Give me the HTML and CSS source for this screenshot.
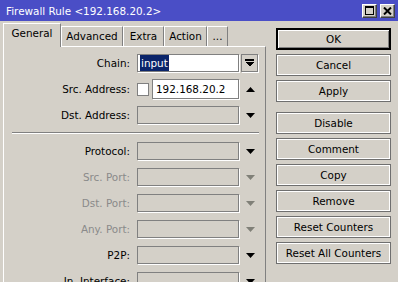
FILE: index.html
```html
<!DOCTYPE html>
<html>
<head>
<meta charset="utf-8">
<link rel="stylesheet" href="styles.css">
</head>
<body>
<div class="titlebar">
  <span class="title">Firewall Rule &lt;192.168.20.2&gt;</span>
  <div class="tb-btns">
    <span class="tb-btn"><svg width="9" height="9" viewBox="0 0 9 9" shape-rendering="crispEdges"><rect x="0.5" y="0.5" width="8" height="8" fill="none" stroke="#000"/><rect x="0" y="0" width="9" height="2" fill="#000"/></svg></span>
    <span class="tb-btn"><svg width="9" height="8" viewBox="0 0 9 8"><path d="M1 0.5 L8 7.5 M8 0.5 L1 7.5" stroke="#000" stroke-width="2"/></svg></span>
  </div>
</div>
<div class="main">
  <div class="left">
    <div class="tabs">
      <div class="tab active t-general">General</div>
      <div class="tab t-advanced">Advanced</div>
      <div class="tab t-extra">Extra</div>
      <div class="tab t-action">Action</div>
      <div class="tab t-more">...</div>
    </div>
    <div class="panel">
      <div class="row">
        <div class="label">Chain:</div>
        <div class="field white"><span class="sel">input</span></div>
        <div class="dd-btn"><svg width="9" height="8" viewBox="0 0 9 8" shape-rendering="crispEdges"><rect x="0" y="0" width="9" height="2" fill="#000"/><polygon points="0,3 9,3 4.5,7.5" fill="#000"/></svg></div>
      </div>
      <div class="row">
        <div class="label">Src. Address:</div>
        <div class="combo">
          <span class="check"></span>
          <div class="field white addr">192.168.20.2</div>
        </div>
        <div class="arrow"><svg width="9" height="5" viewBox="0 0 9 5"><polygon points="0,5 9,5 4.5,0" fill="#000"/></svg></div>
      </div>
      <div class="row">
        <div class="label">Dst. Address:</div>
        <div class="field"></div>
        <div class="arrow"><svg width="9" height="5" viewBox="0 0 9 5"><polygon points="0,0 9,0 4.5,5" fill="#000"/></svg></div>
      </div>
      <div class="sep"></div>
      <div class="row">
        <div class="label">Protocol:</div>
        <div class="field"></div>
        <div class="arrow"><svg width="9" height="5" viewBox="0 0 9 5"><polygon points="0,0 9,0 4.5,5" fill="#000"/></svg></div>
      </div>
      <div class="row dim">
        <div class="label">Src. Port:</div>
        <div class="field"></div>
        <div class="arrow"><svg width="9" height="5" viewBox="0 0 9 5"><polygon points="0,0 9,0 4.5,5" fill="#808078"/></svg></div>
      </div>
      <div class="row dim">
        <div class="label">Dst. Port:</div>
        <div class="field"></div>
        <div class="arrow"><svg width="9" height="5" viewBox="0 0 9 5"><polygon points="0,0 9,0 4.5,5" fill="#808078"/></svg></div>
      </div>
      <div class="row dim">
        <div class="label">Any. Port:</div>
        <div class="field"></div>
        <div class="arrow"><svg width="9" height="5" viewBox="0 0 9 5"><polygon points="0,0 9,0 4.5,5" fill="#808078"/></svg></div>
      </div>
      <div class="row">
        <div class="label">P2P:</div>
        <div class="field"></div>
        <div class="arrow"><svg width="9" height="5" viewBox="0 0 9 5"><polygon points="0,0 9,0 4.5,5" fill="#000"/></svg></div>
      </div>
      <div class="row">
        <div class="label">In. Interface:</div>
        <div class="field"></div>
        <div class="arrow"><svg width="9" height="5" viewBox="0 0 9 5"><polygon points="0,0 9,0 4.5,5" fill="#000"/></svg></div>
      </div>
    </div>
  </div>
  <div class="buttons">
    <div class="btn default">OK</div>
    <div class="btn">Cancel</div>
    <div class="btn">Apply</div>
    <div class="btn spaced">Disable</div>
    <div class="btn">Comment</div>
    <div class="btn">Copy</div>
    <div class="btn">Remove</div>
    <div class="btn">Reset Counters</div>
    <div class="btn">Reset All Counters</div>
  </div>
</div>
</body>
</html>
```
FILE: styles.css
```css
html, body {
  margin: 0;
  padding: 0;
}
body {
  width: 398px;
  height: 282px;
  overflow: hidden;
  background: #d4d0c8;
  font-family: "DejaVu Sans", sans-serif;
  font-size: 10.4px;
  color: #000;
}
.titlebar {
  height: 21px;
  background: #4a4ec6;
  display: flex;
  align-items: center;
  justify-content: space-between;
  padding: 0 3px 0 6px;
  color: #fff;
}
.title {
  white-space: nowrap;
}
.tb-btns {
  display: flex;
  gap: 3px;
}
.tb-btn {
  width: 15px;
  height: 14px;
  box-sizing: border-box;
  background: #d4d0c8;
  border: 1px solid;
  border-color: #fff #404040 #404040 #fff;
  box-shadow: inset -1px -1px #808080;
  display: flex;
  align-items: center;
  justify-content: center;
}
.tb-btn svg {
  display: block;
}
.main {
  display: flex;
  padding-top: 2px;
}
.left {
  margin-left: 3px;
  width: 263px;
}
.tabs {
  display: flex;
  align-items: flex-end;
  height: 23px;
}
.tab {
  height: 20px;
  box-sizing: border-box;
  border-top: 1px solid #fff;
  border-left: 1px solid #fff;
  border-right: 1px solid #808080;
  background: #d0ccc4;
  text-align: center;
  line-height: 19px;
  white-space: nowrap;
}
.tab.active {
  height: 24px;
  margin-bottom: -1px;
  position: relative;
  z-index: 1;
  background: #d4d0c8;
  line-height: 19px;
}
.t-general { width: 58px; }
.t-advanced { width: 62px; }
.t-extra { width: 41px; }
.t-action { width: 43px; }
.t-more { width: 21px; }
.panel {
  height: 260px;
  box-sizing: border-box;
  border-top: 1px solid #fff;
  border-left: 1px solid #fff;
  border-right: 1px solid #808080;
  padding-top: 7px;
}
.row {
  display: flex;
  align-items: center;
  height: 18px;
  margin-bottom: 8px;
}
.label {
  width: 133px;
  box-sizing: border-box;
  padding-right: 7px;
  text-align: right;
  white-space: nowrap;
}
.dim .label {
  color: #8a8a8a;
}
.field {
  width: 102px;
  height: 18px;
  box-sizing: border-box;
  border: 1px solid #808080;
  box-shadow: 1px 1px 0 #fff;
  line-height: 16px;
  padding-left: 2px;
  white-space: nowrap;
}
.field.white {
  background: #fff;
}
.sel {
  display: inline-block;
  background: #0a246a;
  color: #fff;
  padding: 0 1px;
  line-height: 16px;
}
.combo {
  width: 102px;
  display: flex;
  align-items: center;
  gap: 3px;
}
.check {
  width: 12px;
  height: 13px;
  box-sizing: border-box;
  border: 1px solid #808080;
  background: #fff;
}
.field.addr {
  width: 87px;
  height: 20px;
  line-height: 18px;
  padding-left: 3px;
}
.dd-btn {
  width: 17px;
  height: 18px;
  margin-left: 2px;
  box-sizing: border-box;
  border: 1px solid #808080;
  box-shadow: 1px 1px 0 #fff;
  display: flex;
  align-items: center;
  justify-content: center;
}
.dd-btn svg, .arrow svg {
  display: block;
}
.arrow {
  width: 18px;
  margin-left: 2px;
  display: flex;
  justify-content: center;
}
.sep {
  border-top: 1px solid #808080;
  border-bottom: 1px solid #fff;
  margin: 0 6px 8px 8px;
}
.buttons {
  margin-left: 10px;
  margin-top: 5px;
  width: 115px;
  display: flex;
  flex-direction: column;
  gap: 4px;
}
.btn {
  height: 22px;
  box-sizing: border-box;
  border: 1px solid #6f6f6f;
  box-shadow: inset 1px 1px #fff, inset -1px -1px #fff;
  background: #d4d0c8;
  text-align: center;
  line-height: 20px;
  white-space: nowrap;
}
.btn.default {
  border: 2px solid #000;
  box-shadow: inset 1px 1px #fff, inset -1px -1px #808080;
  line-height: 18px;
}
.btn.spaced {
  margin-top: 6px;
}
```
